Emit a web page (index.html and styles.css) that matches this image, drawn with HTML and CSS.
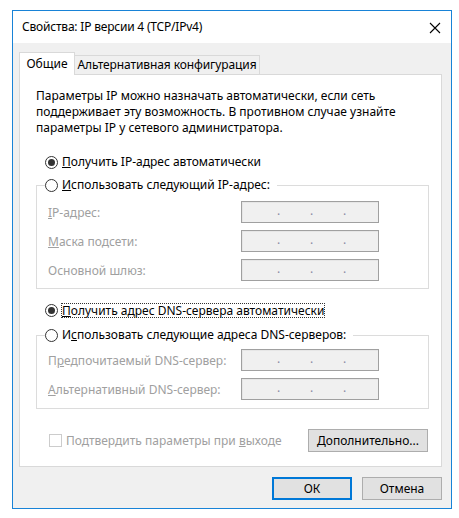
FILE: index.html
```html
<!DOCTYPE html>
<html lang="ru">
<head>
    <meta charset="UTF-8">
    <meta name="viewport" content="width=device-width, initial-scale=1.0">
    <title>Свойства: IP версии 4 (TCP/IPv4)</title>
    <link rel="stylesheet" href="styles.css">
</head>
<body>
    <div class="window">
        <div class="title-bar">
            <span class="title">Свойства: IP версии 4 (TCP/IPv4)</span>
            <svg class="close" width="12" height="12" viewBox="0 0 12 12">
                <path d="M1 1L11 11M11 1L1 11" stroke="#000" stroke-width="1.1" fill="none"/>
            </svg>
        </div>
        <div class="window-body">
            <div class="tabs">
                <div class="tab active">Общие</div>
                <div class="tab">Альтернативная конфигурация</div>
            </div>
            <div class="panel">
                <p class="intro">Параметры IP можно назначать автоматически, если сеть<br>поддерживает эту возможность. В противном случае узнайте<br>параметры IP у сетевого администратора.</p>

                <div class="option first-option">
                    <span class="radio checked"></span>
                    <span><u>П</u>олучить IP-адрес автоматически</span>
                </div>

                <fieldset class="group ip-group">
                    <legend class="option">
                        <span class="radio"></span>
                        <span><u>И</u>спользовать следующий IP-адрес:</span>
                    </legend>
                    <div class="fields">
                        <span class="field-label"><u>I</u>P-адрес:</span>
                        <div class="ip-box"><span>.</span><span>.</span><span>.</span></div>
                        <span class="field-label"><u>М</u>аска подсети:</span>
                        <div class="ip-box"><span>.</span><span>.</span><span>.</span></div>
                        <span class="field-label">Основной шлюз:</span>
                        <div class="ip-box"><span>.</span><span>.</span><span>.</span></div>
                    </div>
                </fieldset>

                <div class="option dns-option">
                    <span class="radio checked"></span>
                    <span class="focused"><u>П</u>олучить адрес DNS-сервера автоматически</span>
                </div>

                <fieldset class="group dns-group">
                    <legend class="option">
                        <span class="radio"></span>
                        <span>И<u>с</u>пользовать следующие адреса DNS-серверов:</span>
                    </legend>
                    <div class="fields">
                        <span class="field-label">П<u>р</u>едпочитаемый DNS-сервер:</span>
                        <div class="ip-box"><span>.</span><span>.</span><span>.</span></div>
                        <span class="field-label"><u>А</u>льтернативный DNS-сервер:</span>
                        <div class="ip-box"><span>.</span><span>.</span><span>.</span></div>
                    </div>
                </fieldset>

                <div class="panel-footer">
                    <div class="check-row">
                        <span class="checkbox"></span>
                        <span>Подтвердить параметры при <u>в</u>ыходе</span>
                    </div>
                    <button class="btn advanced"><u>Д</u>ополнительно...</button>
                </div>
            </div>
            <div class="dialog-buttons">
                <button class="btn default">ОК</button>
                <button class="btn">Отмена</button>
            </div>
        </div>
    </div>
</body>
</html>
```

FILE: styles.css
```css
* {
    box-sizing: border-box;
}
body {
    margin: 0;
    background-color: #fff;
    font-family: "Noto Sans", sans-serif;
    font-size: 12px;
    color: #000;
}
.window {
    margin: 10px 0 0 12px;
    width: 440px;
    height: 499px;
    border: 1px solid #1883d7;
    background-color: #f0f0f0;
}
.title-bar {
    height: 32px;
    background-color: #fff;
    display: flex;
    align-items: center;
    justify-content: space-between;
    padding: 0 10px 0 9px;
}
.title {
    line-height: 16px;
    letter-spacing: -0.2px;
}
.close {
    margin-top: 1px;
}
.window-body {
    padding: 9px 9px 0 6px;
}
.tabs {
    display: flex;
    align-items: flex-end;
    height: 22px;
}
.tab {
    height: 19px;
    line-height: 18px;
    text-align: center;
    white-space: nowrap;
    background-color: #f0f0f0;
    border: 1px solid #d9d9d9;
    border-bottom: none;
    border-left: none;
}
.tab.active {
    position: relative;
    z-index: 1;
    height: 23px;
    margin-bottom: -1px;
    width: 56px;
    line-height: 21px;
    background-color: #fff;
    border-left: 1px solid #d9d9d9;
}
.tab:not(.active) {
    width: 185px;
    letter-spacing: -0.1px;
}
.panel {
    height: 393px;
    border: 1px solid #d9d9d9;
    background-color: #fff;
}
.intro {
    margin: 13px 0 0 16px;
    line-height: 16px;
}
.option {
    display: flex;
    align-items: center;
    height: 16px;
    line-height: 16px;
}
.radio {
    width: 13px;
    height: 13px;
    margin-right: 4px;
    border: 1px solid #333;
    border-radius: 50%;
    background-color: #fff;
    display: flex;
    align-items: center;
    justify-content: center;
}
.radio.checked::after {
    content: "";
    width: 7px;
    height: 7px;
    border-radius: 50%;
    background-color: #333;
}
.first-option {
    margin: 18px 0 0 25px;
}
.dns-option {
    margin: 13px 0 0 25px;
}
.focused {
    line-height: 13px;
    outline: 1px dotted #333;
}
.group {
    margin: 7px 12px 0 16px;
    padding: 0 0 7px 0;
    border: 1px solid #dcdcdc;
    min-width: 0;
}
.group legend {
    margin-left: 8px;
    padding: 0 7px 0 0;
}
.dns-group {
    margin-top: 9px;
    padding-bottom: 8px;
}
.fields {
    display: grid;
    grid-template-columns: 193px 138px;
    row-gap: 7px;
    align-items: center;
    margin-top: 8px;
    padding-left: 11px;
    color: #a0a0a0;
}
.dns-group .fields {
    margin-top: 6px;
}
.ip-box {
    height: 22px;
    display: flex;
    padding-left: 35px;
    line-height: 17px;
    background-color: #f0f0f0;
    border: 1px solid #a0a0a0;
    box-shadow: inset 1px 1px 0 #e6e6e6;
    color: #8a8aa4;
}
.ip-box span {
    width: 33px;
}
.panel-footer {
    display: flex;
    justify-content: space-between;
    align-items: center;
    margin: 20px 13px 0 29px;
}
.check-row {
    display: flex;
    align-items: center;
    color: #a0a0a0;
}
.checkbox {
    width: 13px;
    height: 13px;
    margin-right: 4px;
    border: 1px solid #cccccc;
    background-color: #fff;
}
.btn {
    height: 23px;
    padding: 0;
    font-family: inherit;
    font-size: 12px;
    color: #000;
    background-color: #e1e1e1;
    border: 1px solid #adadad;
}
.advanced {
    width: 120px;
}
.dialog-buttons {
    display: flex;
    justify-content: flex-end;
    gap: 10px;
    margin-top: 10px;
}
.dialog-buttons .btn {
    width: 80px;
}
.btn.default {
    border: 2px solid #0078d7;
}
```
